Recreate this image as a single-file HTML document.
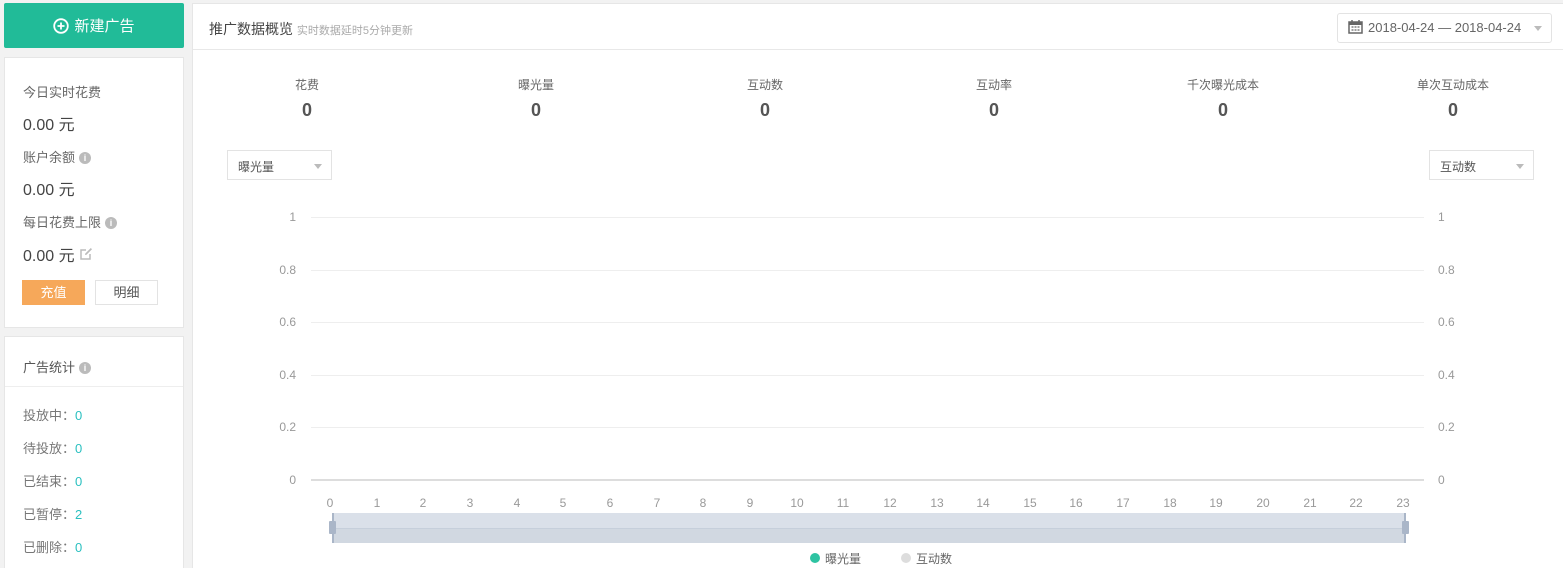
<!DOCTYPE html>
<html><head><meta charset="utf-8"><style>
*{margin:0;padding:0;box-sizing:border-box}
html,body{width:1563px;height:568px;overflow:hidden}
body{background:#f2f2f2;font-family:"Liberation Sans","Noto Sans CJK SC",sans-serif;position:relative;color:#555}
.a{position:absolute}
.btn{left:4px;top:3px;width:180px;height:45px;background:#21bb98;border-radius:2px;color:#fff;font-size:15px;display:flex;align-items:center;justify-content:center;gap:5px}
.card{background:#fff;border:1px solid #e6e6e6}
.lbl{font-size:13px;color:#666;left:18px}
.val{font-size:16px;color:#444;left:18px}
.info{display:inline-block;width:12px;height:12px;border-radius:50%;background:#bbb;color:#fff;font-size:9px;text-align:center;line-height:12px;font-weight:bold;vertical-align:1px;margin-left:4px}
.st{font-size:13px;color:#777;left:18px}
.st b{font-weight:normal;color:#2bc0c0}
.sl{font-size:12px;color:#666;width:200px;text-align:center;top:76px}
.sv{font-size:18px;font-weight:bold;color:#555;width:200px;text-align:center;top:100px}
.sel{border:1px solid #e3e3e3;height:30px;font-size:12px;color:#555;padding:7px 10px;background:#fff}
.tri{position:absolute;right:9px;top:13px;border:4px solid transparent;border-top:5px solid #bbb;border-bottom:0}
.g{left:311px;width:1113px;height:1px;background:#eee}
.yl{font-size:12px;color:#999;width:30px}
.xl{font-size:12px;color:#999;width:30px;text-align:center;top:496px}
</style></head><body>
<div class="a btn"><svg width="16" height="16" viewBox="0 0 16 16"><circle cx="8" cy="8" r="6.8" fill="none" stroke="#fff" stroke-width="1.8"/><path d="M8 4.5v7M4.5 8h7" stroke="#fff" stroke-width="1.8"/></svg>新建广告</div>
<div class="a card" style="left:4px;top:57px;width:180px;height:271px">
<div class="a lbl" style="top:24px">今日实时花费</div>
<div class="a val" style="top:53px">0.00 元</div>
<div class="a lbl" style="top:89px">账户余额<span class="info">i</span></div>
<div class="a val" style="top:118px">0.00 元</div>
<div class="a lbl" style="top:154px">每日花费上限<span class="info">i</span></div>
<div class="a val" style="top:184px">0.00 元 <svg width="14" height="14" viewBox="0 0 14 14" style="vertical-align:0"><path d="M11 7v5H2V3h5" fill="none" stroke="#bbb" stroke-width="1.5"/><path d="M6 8l1.5-.3L13 2.2 11.8 1 6.3 6.5z" fill="#bbb"/></svg></div>
<div class="a" style="left:17px;top:222px;width:63px;height:25px;background:#f6a85a;color:#fff;font-size:13px;text-align:center;line-height:25px">充值</div>
<div class="a" style="left:90px;top:222px;width:63px;height:25px;border:1px solid #e3e3e3;color:#555;font-size:13px;text-align:center;line-height:23px">明细</div>
</div>
<div class="a card" style="left:4px;top:336px;width:180px;height:232px;border-bottom:none">
<div class="a" style="left:18px;top:20px;font-size:13px;color:#555">广告统计<span class="info">i</span></div>
<div class="a" style="left:0;top:49px;width:178px;height:1px;background:#eee"></div>
<div class="a st" style="top:68px">投放中：<b>0</b></div>
<div class="a st" style="top:101px">待投放：<b>0</b></div>
<div class="a st" style="top:134px">已结束：<b>0</b></div>
<div class="a st" style="top:167px">已暂停：<b>2</b></div>
<div class="a st" style="top:200px">已删除：<b>0</b></div>
</div>
<div class="a card" style="left:192px;top:3px;width:1371px;height:565px;border-bottom:none;border-right:none">
<div class="a" style="left:16px;top:15px;font-size:14px;color:#444">推广数据概览 <span style="font-size:11px;color:#aaa">实时数据延时5分钟更新</span></div>
<div class="a" style="left:0;top:45px;width:1371px;height:1px;background:#e8e8e8"></div>
<div class="a" style="left:1144px;top:9px;width:215px;height:30px;border:1px solid #e3e3e3;border-radius:3px;font-size:13px;color:#666;padding:6px 0 0 10px;white-space:nowrap"><svg width="15" height="14" viewBox="0 0 15 14" style="vertical-align:-2px;margin-right:5px"><rect x="1" y="2" width="13" height="11" fill="none" stroke="#666" stroke-width="1.5"/><rect x="1" y="2" width="13" height="3" fill="#666"/><path d="M4 0v3M11 0v3" stroke="#666" stroke-width="1.5"/><path d="M3.5 7h2M6.5 7h2M9.5 7h2M3.5 10h2M6.5 10h2M9.5 10h2" stroke="#666" stroke-width="1.3"/></svg>2018-04-24 — 2018-04-24<span class="tri" style="top:12px"></span></div>
</div>
<div class="a sl" style="left:207px">花费</div><div class="a sv" style="left:207px">0</div>
<div class="a sl" style="left:436px">曝光量</div><div class="a sv" style="left:436px">0</div>
<div class="a sl" style="left:665px">互动数</div><div class="a sv" style="left:665px">0</div>
<div class="a sl" style="left:894px">互动率</div><div class="a sv" style="left:894px">0</div>
<div class="a sl" style="left:1123px">千次曝光成本</div><div class="a sv" style="left:1123px">0</div>
<div class="a sl" style="left:1353px">单次互动成本</div><div class="a sv" style="left:1353px">0</div>
<div class="a sel" style="left:227px;top:150px;width:105px">曝光量<span class="tri"></span></div>
<div class="a sel" style="left:1429px;top:150px;width:105px">互动数<span class="tri"></span></div>
<div class="a g" style="top:217px"></div><div class="a g" style="top:270px"></div><div class="a g" style="top:322px"></div><div class="a g" style="top:375px"></div><div class="a g" style="top:427px"></div>
<div class="a" style="left:311px;top:479px;width:1113px;height:2px;background:#ddd"></div>
<div class="a yl" style="left:266px;top:210px;text-align:right">1</div><div class="a yl" style="left:1438px;top:210px">1</div>
<div class="a yl" style="left:266px;top:263px;text-align:right">0.8</div><div class="a yl" style="left:1438px;top:263px">0.8</div>
<div class="a yl" style="left:266px;top:315px;text-align:right">0.6</div><div class="a yl" style="left:1438px;top:315px">0.6</div>
<div class="a yl" style="left:266px;top:368px;text-align:right">0.4</div><div class="a yl" style="left:1438px;top:368px">0.4</div>
<div class="a yl" style="left:266px;top:420px;text-align:right">0.2</div><div class="a yl" style="left:1438px;top:420px">0.2</div>
<div class="a yl" style="left:266px;top:473px;text-align:right">0</div><div class="a yl" style="left:1438px;top:473px">0</div>
<div class="a xl" style="left:315px">0</div><div class="a xl" style="left:362px">1</div><div class="a xl" style="left:408px">2</div><div class="a xl" style="left:455px">3</div><div class="a xl" style="left:502px">4</div><div class="a xl" style="left:548px">5</div><div class="a xl" style="left:595px">6</div><div class="a xl" style="left:642px">7</div><div class="a xl" style="left:688px">8</div><div class="a xl" style="left:735px">9</div><div class="a xl" style="left:782px">10</div><div class="a xl" style="left:828px">11</div><div class="a xl" style="left:875px">12</div><div class="a xl" style="left:922px">13</div><div class="a xl" style="left:968px">14</div><div class="a xl" style="left:1015px">15</div><div class="a xl" style="left:1061px">16</div><div class="a xl" style="left:1108px">17</div><div class="a xl" style="left:1155px">18</div><div class="a xl" style="left:1201px">19</div><div class="a xl" style="left:1248px">20</div><div class="a xl" style="left:1295px">21</div><div class="a xl" style="left:1341px">22</div><div class="a xl" style="left:1388px">23</div>
<div class="a" style="left:332px;top:513px;width:1074px;height:15px;background:#dae0e9"></div>
<div class="a" style="left:332px;top:528px;width:1074px;height:15px;background:#d1d8e1;border-top:1px solid #c6cfdb"></div>
<div class="a" style="left:332px;top:513px;width:2px;height:30px;background:#aab6c8"></div>
<div class="a" style="left:1404px;top:513px;width:2px;height:30px;background:#aab6c8"></div>
<div class="a" style="left:329px;top:521px;width:7px;height:13px;background:#aab6c8;border-radius:1px"></div>
<div class="a" style="left:1402px;top:521px;width:7px;height:13px;background:#aab6c8;border-radius:1px"></div>
<div class="a" style="left:810px;top:553px;width:10px;height:10px;border-radius:50%;background:#2ec3a2"></div>
<div class="a" style="left:825px;top:550px;font-size:12px;color:#666">曝光量</div>
<div class="a" style="left:901px;top:553px;width:10px;height:10px;border-radius:50%;background:#ddd"></div>
<div class="a" style="left:916px;top:550px;font-size:12px;color:#666">互动数</div>
</body></html>
